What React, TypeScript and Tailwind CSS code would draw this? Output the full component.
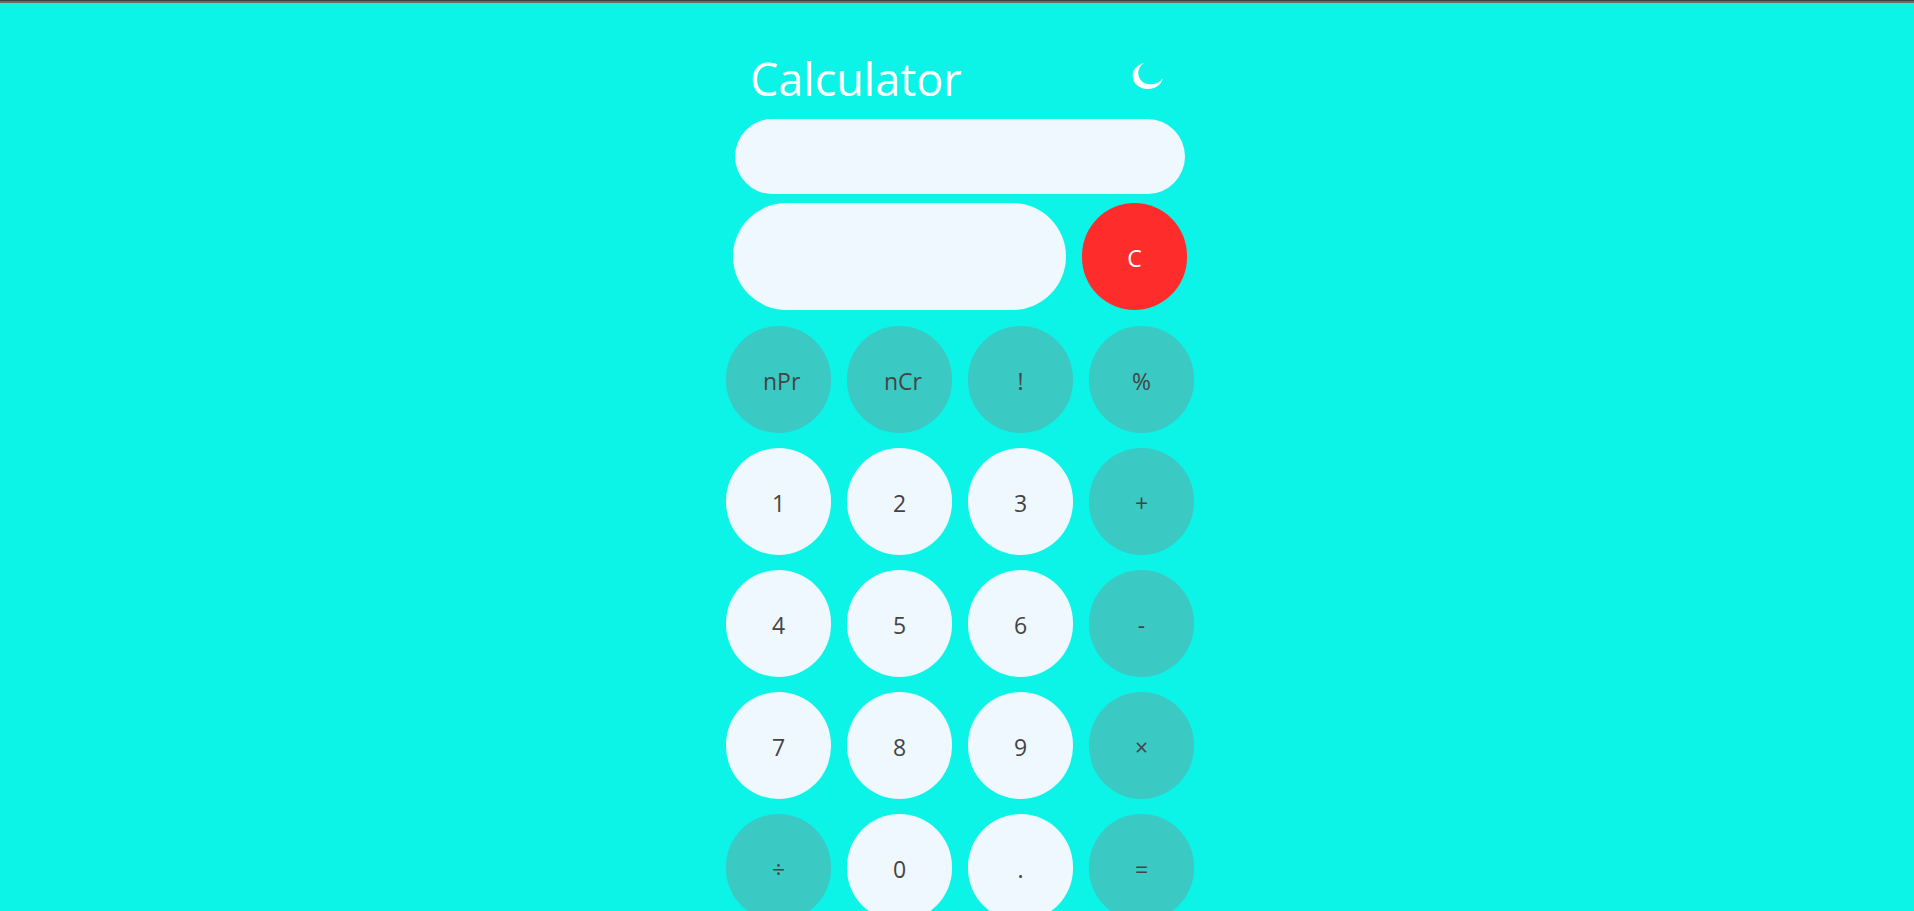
import { useState } from "react";

type Tone = "digit" | "operator" | "clear";

const TONES: Record<Tone, string> = {
  digit: "bg-[#f0f8ff] text-[#444444]",
  operator: "bg-[#3bc9c4] text-[#444444]",
  clear: "bg-[#ff2c2c] text-white",
};

const KEYS = [
  "nPr", "nCr", "!", "%",
  "1", "2", "3", "+",
  "4", "5", "6", "-",
  "7", "8", "9", "×",
  "÷", "0", ".", "=",
];

function Key({ label, tone, onPress }: { label: string; tone: Tone; onPress: () => void }) {
  return (
    <button
      type="button"
      onClick={onPress}
      className={`h-[107px] w-[105px] shrink-0 cursor-pointer rounded-full px-[37px] pt-[2px] text-center text-[23px] leading-8 whitespace-nowrap ${TONES[tone]}`}
    >
      {label}
    </button>
  );
}

export default function App() {
  const [expression, setExpression] = useState("");
  const [result, setResult] = useState("");

  const press = (key: string) => {
    if (key === "=") setResult(expression);
    else setExpression(expression + key);
  };

  const clear = () => {
    setExpression("");
    setResult("");
  };

  return (
    <div className="h-screen overflow-hidden border-t border-[#3f4040] bg-[#0bf4e7] font-['Open_Sans','Noto_Sans',sans-serif]">
      <div className="h-[2px] bg-[#6b6b6b]" />
      <main className="flex flex-col items-center pt-[44px] pl-[6px]">
        <header className="flex w-[450px] items-start justify-between pr-[20px] pl-[15px]">
          <h1 className="text-[45px] leading-[64px] font-normal text-white">Calculator</h1>
          <button type="button" aria-label="Toggle dark mode" className="mt-[14px] cursor-pointer">
            <svg width="34" height="30" viewBox="0 0 34 30" fill="#ffffff" aria-hidden="true">
              <path d="M13 2C6 4 1.700 8.500 1.700 14.500C1.700 22.500 8 28 16.700 28C24.500 28 30.500 23.500 31.800 17.500C28.500 21.500 24.500 23.300 19.500 23.300C12 23.300 7.300 18.500 7.300 11.500C7.300 7.500 9.500 4.500 13 2Z" />
            </svg>
          </button>
        </header>
        <input
          aria-label="Expression"
          readOnly
          value={expression}
          className="mt-[8px] h-[75px] w-[450px] rounded-full bg-[#f0f8ff] px-8 text-right text-2xl text-[#444444] outline-none"
        />
        <div className="mt-[9px] flex gap-4">
          <input
            aria-label="Result"
            readOnly
            value={result}
            className="h-[107px] w-[333px] rounded-full bg-[#f0f8ff] px-10 text-right text-3xl text-[#444444] outline-none"
          />
          <Key label="C" tone="clear" onPress={clear} />
        </div>
        <div className="mt-4 grid grid-cols-4 gap-x-4 gap-y-[15px]">
          {KEYS.map((key) => (
            <Key
              key={key}
              label={key}
              tone={/[0-9.]/.test(key) ? "digit" : "operator"}
              onPress={() => press(key)}
            />
          ))}
        </div>
      </main>
    </div>
  );
}
